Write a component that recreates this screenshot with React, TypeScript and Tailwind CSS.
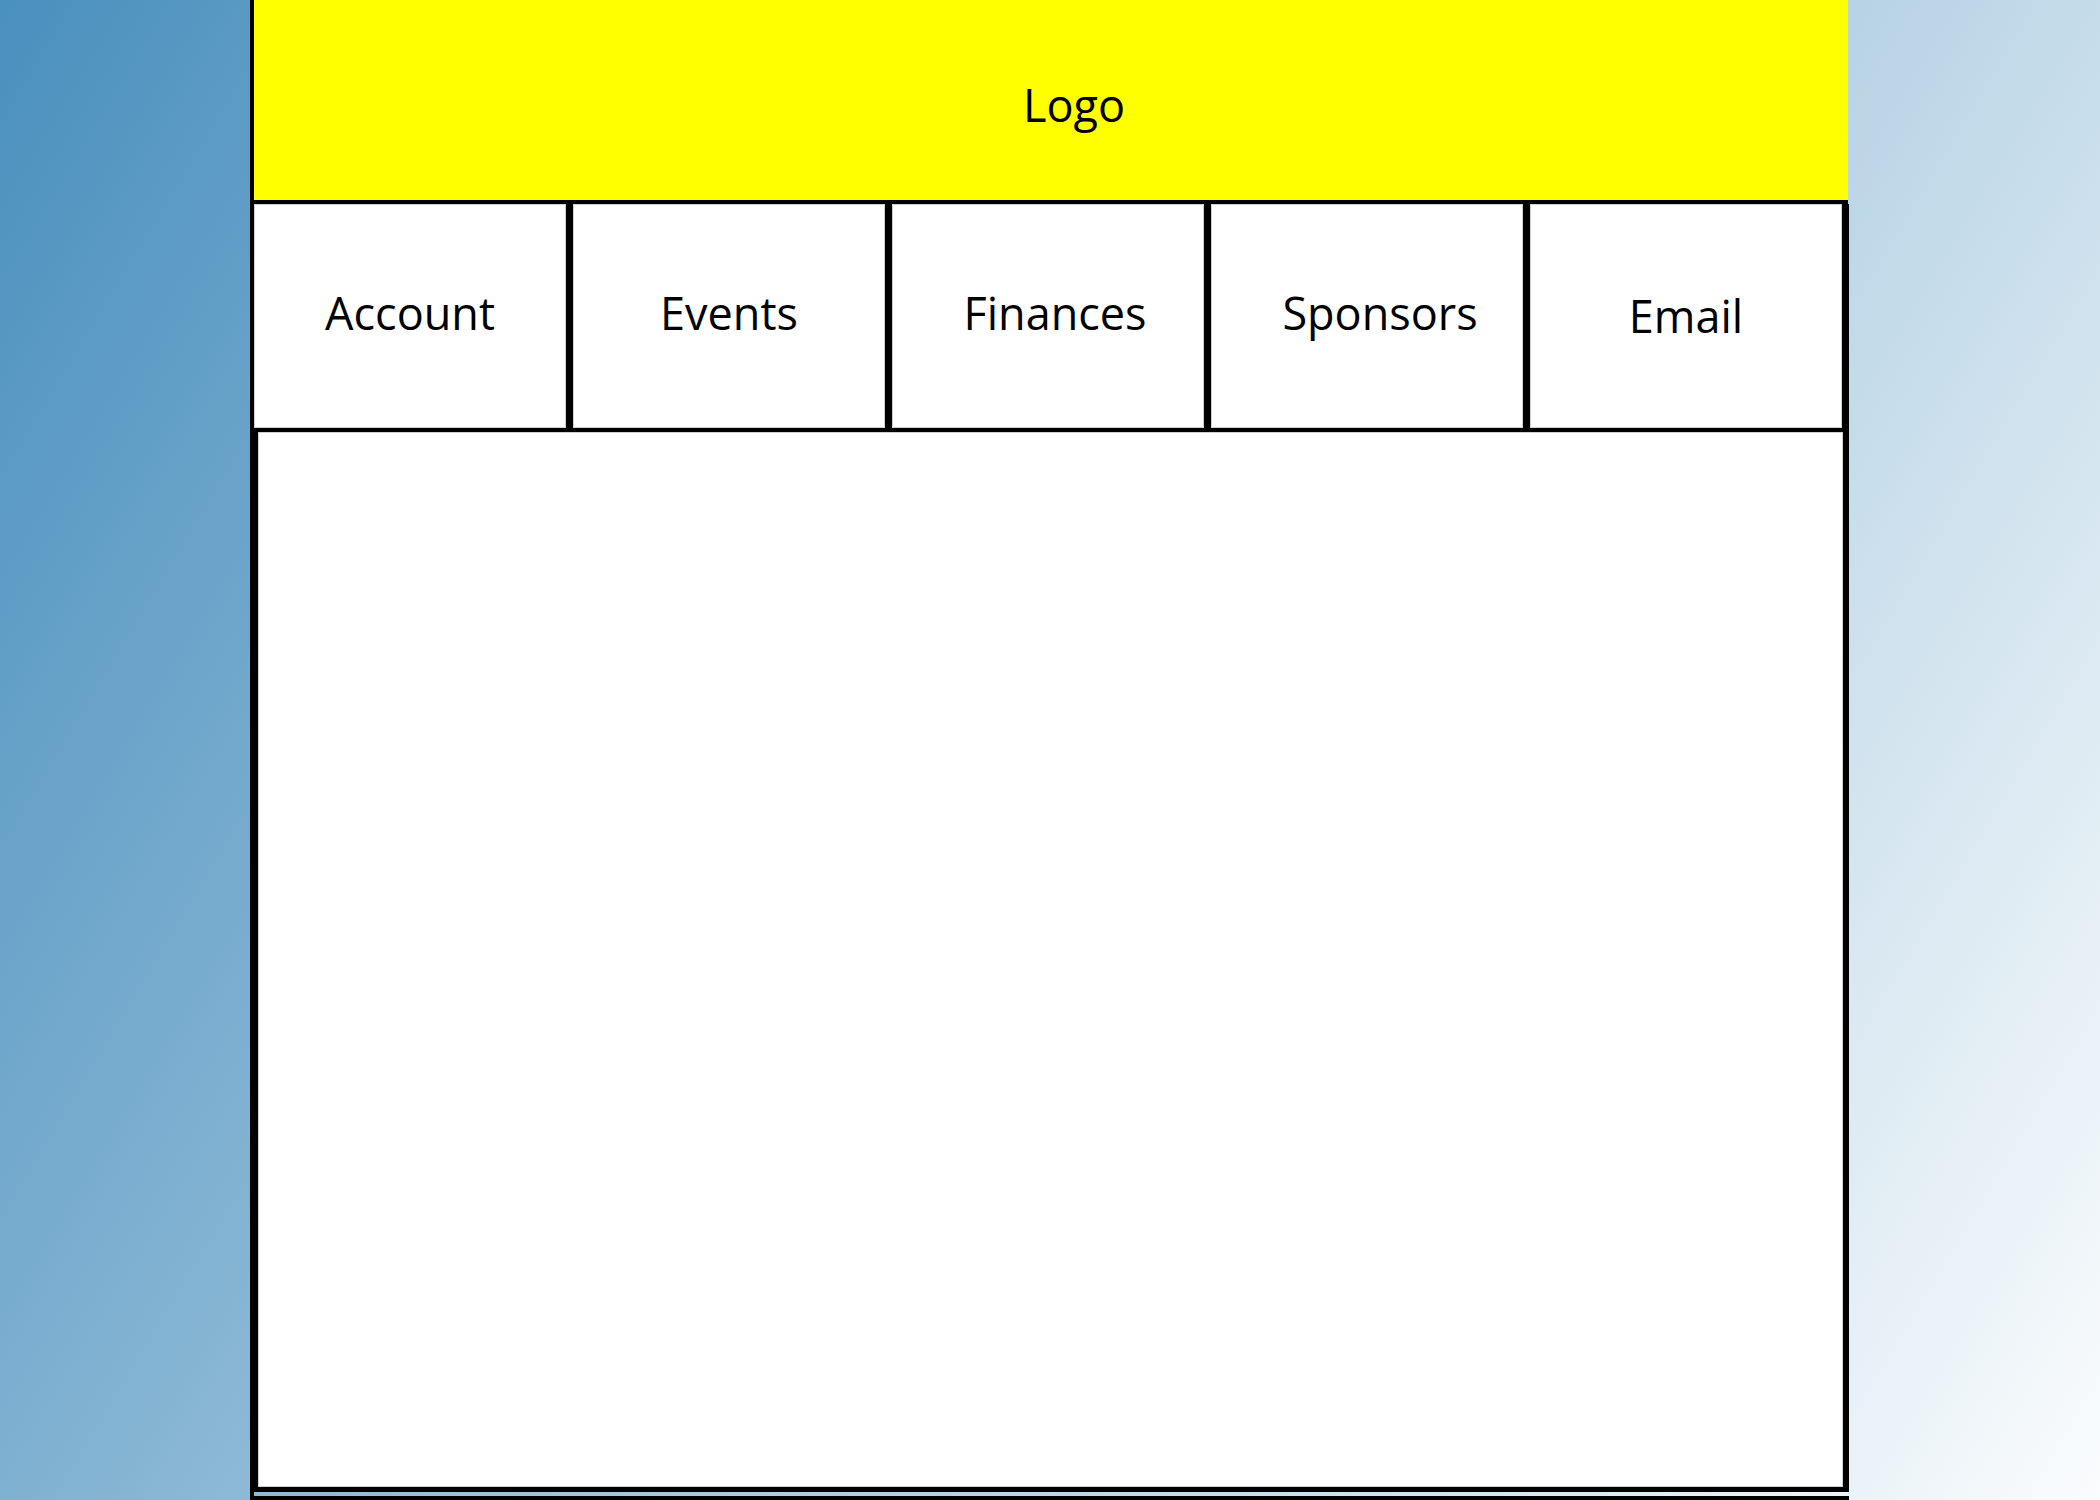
const tabs = [
  { label: "Account", cls: "pb-[8px]" },
  { label: "Events", cls: "pb-[8px]" },
  { label: "Finances", cls: "pb-[8px] pl-[14px]" },
  { label: "Sponsors", cls: "pb-[8px] pl-[26px]" },
  { label: "Email", cls: "pb-[2px]" },
];

const App = () => {
  return (
    <div className="h-[1500px] w-full overflow-hidden bg-[linear-gradient(121deg,#4a90be_0%,#fafcfd_100%)] font-['Open_Sans',sans-serif] text-black">
      <div className="ml-[250px] flex h-[1500px] w-[1599px] flex-col border-l-4 border-black">
        {/* header */}
        <div className="mr-px flex h-[204px] shrink-0 items-center justify-center border-b-4 border-black bg-[#ffff00] pl-[46px] pt-[8px]">
          <span className="text-[45px] leading-none">Logo</span>
        </div>

        {/* nav */}
        <div className="flex h-[228px] shrink-0 border-b-4 border-black">
          {tabs.map((t) => (
            <div
              key={t.label}
              className="flex flex-1 items-center justify-center border-r-[7px] border-black bg-white shadow-[inset_0_0_0_1px_#cfcfcf]"
            >
              <span className={"text-[45px] leading-none " + t.cls}>{t.label}</span>
            </div>
          ))}
        </div>

        {/* content */}
        <div className="h-[1060px] shrink-0 border-b-[5px] border-l-4 border-r-[6px] border-black bg-white shadow-[inset_0_0_0_1px_#cfcfcf]"></div>
        <div className="h-[4px] shrink-0"></div>
        <div className="h-[4px] shrink-0 bg-black"></div>
      </div>
    </div>
  );
};

export default App;
